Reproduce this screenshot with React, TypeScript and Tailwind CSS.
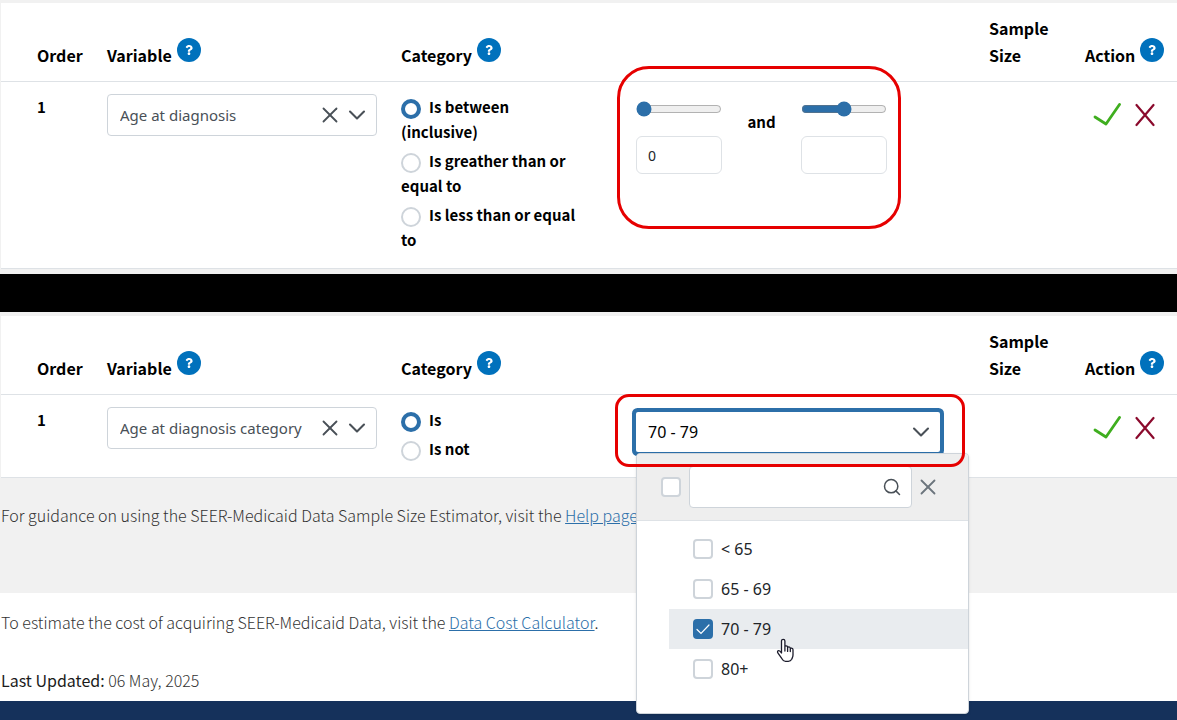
import React, { useState } from 'react';
import { ChevronDown, Search, X } from 'lucide-react';
import { FaQuestion } from 'react-icons/fa';

const AGE_GROUPS = ['< 65', '65 - 69', '70 - 79', '80+'];

function HelpButton({ topic }: { topic: string }) {
  return (
    <button
      type="button"
      aria-label={`Help: ${topic}`}
      className="mb-3 flex h-6 w-6 shrink-0 items-center justify-center rounded-full bg-[#0071bc] text-white"
    >
      <FaQuestion className="h-[10px] w-[10px]" />
    </button>
  );
}

function HeaderCell({ title, help, className = '' }: { title: string; help?: boolean; className?: string }) {
  return (
    <th scope="col" className={`py-3 text-left align-bottom text-[16px] leading-[27px] font-bold ${className}`}>
      {help ? (
        <div className="flex h-[27px] items-center gap-[5px]">
          {title}
          <HelpButton topic={title} />
        </div>
      ) : (
        title
      )}
    </th>
  );
}

function VariableSelect({ value }: { value: string }) {
  return (
    <div className="flex h-[42px] w-[270px] items-center rounded-[4px] border border-[#ced4da] pr-[5px] pl-3 font-['Noto_Sans',sans-serif] text-[15px] text-[#495057]">
      <button type="button" aria-haspopup="listbox" className="flex-1 truncate text-left">
        {value}
      </button>
      <button type="button" aria-label="Clear variable">
        <X size={26} strokeWidth={1.7} />
      </button>
      <button type="button" aria-label="Show variables">
        <ChevronDown size={28} strokeWidth={1.8} />
      </button>
    </div>
  );
}

function ConditionRadios({ name, options }: { name: string; options: string[] }) {
  return (
    <div className="flex flex-col gap-1 pr-[50px] text-[15px] leading-[25px] font-bold">
      {options.map((option, i) => (
        <label key={option} className="block last:mb-1">
          <input
            type="radio"
            name={name}
            defaultChecked={i === 0}
            className="-my-1 mr-2 h-5 w-5 appearance-none rounded-full border-2 border-[#ced4da] bg-white align-middle checked:border-4 checked:border-[#2c6fa9]"
          />
          {option}
        </label>
      ))}
    </div>
  );
}

function RangeField({ label, initial, shown }: { label: string; initial: number; shown: string }) {
  const [position, setPosition] = useState(initial);
  const [text, setText] = useState(shown);

  return (
    <div className="flex w-[86px] flex-col gap-[19px]">
      <input
        type="range"
        aria-label={`${label} slider`}
        min={0}
        max={100}
        value={position}
        onChange={(e) => {
          setPosition(Number(e.target.value));
          setText(e.target.value);
        }}
        className="h-4 w-full accent-[#2c6fa9]"
      />
      <input
        type="text"
        aria-label={label}
        value={text}
        onChange={(e) => setText(e.target.value)}
        className="h-[38px] w-full rounded-[6px] border border-[#dee2e6] px-[11px] font-['Noto_Sans',sans-serif] text-[14px] text-[#212529]"
      />
    </div>
  );
}

function AgeRange() {
  return (
    <div className="relative flex w-[251px] justify-between pt-[7px]">
      <RangeField label="Minimum age" initial={0} shown="0" />
      <span className="pt-2 text-[15px] leading-[25px] font-bold">and</span>
      <RangeField label="Maximum age" initial={50} shown="" />
      <div className="pointer-events-none absolute -top-7 -left-[19px] h-[163px] w-[284px] rounded-[32px] border-3 border-[#e60000]" />
    </div>
  );
}

const checkboxStyle =
  "grid h-5 w-5 shrink-0 appearance-none place-items-center rounded-[4px] border-2 border-[#ced4da] bg-white checked:border-[#2c6fa9] checked:bg-[#2c6fa9]";

function HandPointer() {
  return (
    <svg viewBox="0 0 18 24" className="pointer-events-none absolute top-[29px] left-[107px] z-10 h-6 w-[18px]" aria-hidden="true">
      <path
        d="M5.5 15V3c0-2.3 3.4-2.3 3.4 0v6c0-1.6 2.7-1.6 2.7.2V10c0-1.6 2.7-1.4 2.7.4v.8c0-1.5 2.7-1.3 2.7.6V17c0 2-.8 3-1.3 4.2-.6 1.2-1.8 2.1-3.4 2.1H9.5c-1.8 0-2.8-1.1-3.6-2.6L2 15.2c-1.1-1.6-.2-2.6.8-2.6 1.3 0 1.8.9 2.7 2.4zM8.9 9v4M11.6 10v3.4M14.3 11v2.6"
        fill="#fff"
        stroke="#1b1b2b"
        strokeWidth="1.3"
        strokeLinejoin="round"
        strokeLinecap="round"
      />
    </svg>
  );
}

function AgeGroupSelect() {
  const [selected, setSelected] = useState<string[]>(['70 - 79']);
  const [filter, setFilter] = useState('');

  const toggle = (group: string) => {
    setSelected((prev) => (prev.includes(group) ? prev.filter((g) => g !== group) : [...prev, group]));
  };

  return (
    <div className="relative w-[304px] pt-[5px] font-['Noto_Sans',sans-serif] text-[16px]">
      <button
        type="button"
        aria-haspopup="listbox"
        aria-expanded="true"
        className="flex h-10 w-full items-center justify-between rounded-[2px] bg-white pr-[5px] pl-3 ring-4 ring-[#2c6fa9]"
      >
        <span className="truncate">{selected.join(', ')}</span>
        <ChevronDown size={28} strokeWidth={1.8} className="text-[#495057]" />
      </button>

      <div className="absolute top-[46px] left-0 z-10 w-[333px] rounded-[4px] border border-[#ced4da] bg-white pb-6 shadow-sm">
        <div className="flex h-[67px] items-center gap-2 rounded-t-[3px] border-b border-[#dee2e6] bg-[#eeeeee] pr-6 pl-6">
          <input
            type="checkbox"
            aria-label="Select all"
            checked={selected.length === AGE_GROUPS.length}
            onChange={(e) => setSelected(e.target.checked ? AGE_GROUPS : [])}
            className={checkboxStyle}
          />
          <div className="flex h-[42px] w-[223px] items-center rounded-[4px] border border-[#ced4da] bg-white pr-[9px]">
            <input
              type="text"
              aria-label="Filter age groups"
              value={filter}
              onChange={(e) => setFilter(e.target.value)}
              className="h-full min-w-0 flex-1 px-3 outline-none"
            />
            <Search size={20} strokeWidth={1.8} className="text-[#495057]" />
          </div>
          <button type="button" aria-label="Close" className="-ml-[5px] text-[#6c757d]">
            <X size={26} strokeWidth={1.7} />
          </button>
        </div>
        <ul className="pt-2 pl-8">
          {AGE_GROUPS.filter((g) => g.includes(filter)).map((group) => {
            const checked = selected.includes(group);
            return (
              <li key={group} className={`relative ${checked ? 'bg-[#e9ecef]' : ''}`}>
                <label className="flex h-10 items-center gap-2 pl-6 text-[#212529]">
                  <span className="relative flex">
                    <input type="checkbox" checked={checked} onChange={() => toggle(group)} className={checkboxStyle} />
                    {checked && (
                      <svg viewBox="0 0 20 20" className="pointer-events-none absolute inset-0 h-5 w-5" aria-hidden="true">
                        <path d="M4 10.5l4 4L16 6" fill="none" stroke="#fff" strokeWidth="1.2" strokeLinecap="round" />
                      </svg>
                    )}
                  </span>
                  {group}
                </label>
                {group === '70 - 79' && <HandPointer />}
              </li>
            );
          })}
        </ul>
      </div>

      <div className="pointer-events-none absolute -top-[13px] -left-[21px] z-20 h-[73px] w-[350px] rounded-[14px] border-3 border-[#e60000]" />
    </div>
  );
}

function RowActions() {
  return (
    <div className="flex items-center gap-[14px] pt-2 pl-2">
      <button type="button" aria-label="Apply">
        <svg viewBox="0 0 28 26" className="h-[26px] w-7" aria-hidden="true">
          <path d="M2 15l11 7L26.500 2.500" fill="none" stroke="#3fae1f" strokeWidth="2.800" strokeLinecap="round" strokeLinejoin="round" />
        </svg>
      </button>
      <button type="button" aria-label="Remove">
        <svg viewBox="0 0 20 24" className="h-6 w-5" aria-hidden="true">
          <path d="M1.500 2L18.500 22M18.500 2L1.500 22" fill="none" stroke="#8b0a2d" strokeWidth="2.200" strokeLinecap="round" />
        </svg>
      </button>
    </div>
  );
}

type CriteriaTableProps = {
  variable: string;
  name: string;
  conditions: string[];
  children: React.ReactNode;
};

function CriteriaTable({ variable, name, conditions, children }: CriteriaTableProps) {
  return (
    <div className="border-l border-[#f1f1f1] bg-white">
      <table className="w-full table-fixed border-separate border-spacing-0 text-black [&_td]:border-b [&_td]:border-[#dee2e6] [&_td]:py-3 [&_td]:align-top [&_th]:border-b [&_th]:border-[#dee2e6]">
        <colgroup>
          <col className="w-[106px]" />
          <col className="w-[294px]" />
          <col className="w-[235px]" />
          <col />
          <col className="w-24" />
          <col className="w-[92px]" />
        </colgroup>
        <thead>
          <tr>
            <HeaderCell title="Order" className="pl-9" />
            <HeaderCell title="Variable" help />
            <HeaderCell title="Category" help />
            <th aria-label="Value" />
            <HeaderCell title="Sample Size" className="pr-5" />
            <HeaderCell title="Action" help />
          </tr>
        </thead>
        <tbody>
          <tr>
            <td className="pl-9 text-[15px] leading-[25px] font-bold">1</td>
            <td>
              <VariableSelect value={variable} />
            </td>
            <td>
              <ConditionRadios name={name} options={conditions} />
            </td>
            <td>{children}</td>
            <td />
            <td>
              <RowActions />
            </td>
          </tr>
        </tbody>
      </table>
    </div>
  );
}

export default function App() {
  return (
    <div className="min-h-screen bg-white font-['Noto_Sans_CJK_SC',sans-serif] text-[#333333]">
      <section className="bg-[#f1f1f1] pt-[3px] pb-[5px]">
        <CriteriaTable
          variable="Age at diagnosis"
          name="age-condition"
          conditions={['Is between (inclusive)', 'Is greather than or equal to', 'Is less than or equal to']}
        >
          <AgeRange />
        </CriteriaTable>
      </section>

      <div className="h-[38px] bg-black" />

      <section className="bg-[#f1f1f1] pt-1 pb-[65px]">
        <CriteriaTable variable="Age at diagnosis category" name="age-category-condition" conditions={['Is', 'Is not']}>
          <AgeGroupSelect />
        </CriteriaTable>
        <p className="pt-6 pl-px text-[16px] leading-[26px] font-light">
          For guidance on using the SEER-Medicaid Data Sample Size Estimator, visit the{' '}
          <a href="#help" className="text-[#2c6fa9] underline">
            Help page
          </a>
          .
        </p>
      </section>

      <section className="flex flex-col gap-8 pt-4 pb-2 pl-px text-[16px] leading-[26px] font-light">
        <p>
          To estimate the cost of acquiring SEER-Medicaid Data, visit the{' '}
          <a href="#cost" className="text-[#2c6fa9] underline">
            Data Cost Calculator
          </a>
          .
        </p>
        <p>
          <span className="font-normal text-[#1b1b1b]">Last Updated:</span> 06 May, 2025
        </p>
      </section>

      <footer className="h-[19px] bg-[#15315b]" />
    </div>
  );
}
